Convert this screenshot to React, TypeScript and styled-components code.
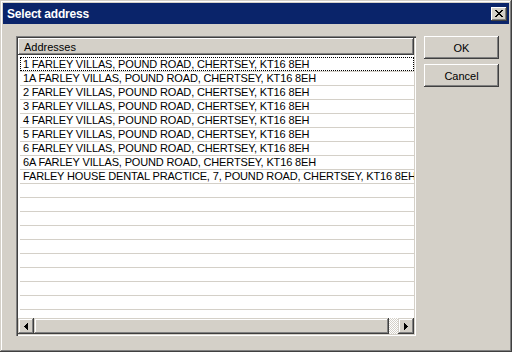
import React from "react";
import styled, { createGlobalStyle } from "styled-components";

const GlobalStyle = createGlobalStyle`
  html, body { margin: 0; padding: 0; background: #d4d0c8; }
  body { width: 512px; height: 352px; overflow: hidden; font-family: "Liberation Sans", Arial, sans-serif; }
  * { box-sizing: border-box; }
`;

const Window = styled.div`
  width: 512px;
  height: 352px;
  background: #d4d0c8;
  padding: 3px;
  display: flex;
  flex-direction: column;
  box-shadow: inset -1px -1px #404040, inset 1px 1px #d4d0c8, inset -2px -2px #808080,
    inset 2px 2px #ffffff;
`;

const TitleBar = styled.div`
  height: 21px;
  flex: none;
  background: #0a246a;
  display: flex;
  align-items: center;
  justify-content: space-between;
  padding: 0 2px 0 4px;
`;

const Title = styled.span`
  color: #ffffff;
  font-weight: bold;
  font-size: 12px;
  letter-spacing: -0.2px;
`;

const CloseButton = styled.div`
  width: 16px;
  height: 14px;
  background: #d4d0c8;
  display: flex;
  align-items: center;
  justify-content: center;
  box-shadow: inset -1px -1px #404040, inset 1px 1px #ffffff, inset -2px -2px #808080;
`;

const Body = styled.div`
  flex: 1;
  display: flex;
  gap: 8px;
  padding: 12px 10px 12px 13px;
`;

const ListBox = styled.div`
  width: 400px;
  height: 300px;
  padding: 2px;
  background: #ffffff;
  display: flex;
  flex-direction: column;
  box-shadow: inset 1px 1px #808080, inset 2px 2px #404040, inset -1px -1px #ffffff,
    inset -2px -2px #d4d0c8;
`;

const Header = styled.div`
  height: 17px;
  flex: none;
  background: #d4d0c8;
  display: flex;
  align-items: center;
  padding-left: 6px;
  font-size: 11px;
  color: #000;
  box-shadow: inset -1px -1px #404040, inset 1px 1px #ffffff, inset -2px -2px #808080;
`;

const Rows = styled.div`
  flex: 1;
  overflow: hidden;
  padding-top: 2px;
`;

const Row = styled.div<{ $focused?: boolean }>`
  height: 14px;
  margin-left: 2px;
  border-top: 1px solid ${(p) => (p.$focused ? "transparent" : "#d4d0c8")};
  outline: ${(p) => (p.$focused ? "1px dotted #000" : "none")};
  outline-offset: -1px;
  font-size: 11px;
  letter-spacing: -0.15px;
  line-height: 13px;
  padding-left: 3px;
  white-space: nowrap;
  overflow: hidden;
  color: #000;
`;

const HScroll = styled.div`
  height: 16px;
  flex: none;
  display: flex;
  background: repeating-conic-gradient(#ffffff 0 25%, #d4d0c8 0 50%) 0 0 / 2px 2px;
`;

const ScrollPart = styled.div<{ $w?: number }>`
  width: ${(p) => (p.$w ? `${p.$w}px` : "16px")};
  height: 16px;
  flex: none;
  background: #d4d0c8;
  display: flex;
  align-items: center;
  justify-content: center;
  box-shadow: inset -1px -1px #404040, inset 1px 1px #d4d0c8, inset -2px -2px #808080,
    inset 2px 2px #ffffff;
`;

const Track = styled.div`
  flex: 1;
`;

const Side = styled.div`
  display: flex;
  flex-direction: column;
  gap: 5px;
`;

const Button = styled.div`
  width: 75px;
  height: 23px;
  background: #d4d0c8;
  display: flex;
  align-items: center;
  justify-content: center;
  font-size: 11px;
  color: #000;
  box-shadow: inset -1px -1px #404040, inset 1px 1px #ffffff, inset -2px -2px #808080;
`;

const addresses = [
  "1 FARLEY VILLAS, POUND ROAD, CHERTSEY, KT16 8EH",
  "1A FARLEY VILLAS, POUND ROAD, CHERTSEY, KT16 8EH",
  "2 FARLEY VILLAS, POUND ROAD, CHERTSEY, KT16 8EH",
  "3 FARLEY VILLAS, POUND ROAD, CHERTSEY, KT16 8EH",
  "4 FARLEY VILLAS, POUND ROAD, CHERTSEY, KT16 8EH",
  "5 FARLEY VILLAS, POUND ROAD, CHERTSEY, KT16 8EH",
  "6 FARLEY VILLAS, POUND ROAD, CHERTSEY, KT16 8EH",
  "6A FARLEY VILLAS, POUND ROAD, CHERTSEY, KT16 8EH",
  "FARLEY HOUSE DENTAL PRACTICE, 7, POUND ROAD, CHERTSEY, KT16 8EH",
];

const rows = [...addresses, ...Array(12).fill("")];

export default function App() {
  return (
    <>
      <GlobalStyle />
      <Window>
        <TitleBar>
          <Title>Select address</Title>
          <CloseButton>
            <svg width="8" height="7" viewBox="0 0 8 7" shapeRendering="crispEdges">
              <path
                d="M0 0h2v1h-2zM6 0h2v1h-2zM1 1h2v1h-2zM5 1h2v1h-2zM2 2h4v1h-4zM3 3h2v1h-2zM2 4h4v1h-4zM1 5h2v1h-2zM5 5h2v1h-2zM0 6h2v1h-2zM6 6h2v1h-2z"
                fill="#000"
              />
            </svg>
          </CloseButton>
        </TitleBar>
        <Body>
          <ListBox>
            <Header>Addresses</Header>
            <Rows>
              {rows.map((a, i) => (
                <Row key={i} $focused={i === 0}>
                  {a}
                </Row>
              ))}
            </Rows>
            <HScroll>
              <ScrollPart>
                <svg width="4" height="7" viewBox="0 0 4 7" shapeRendering="crispEdges">
                  <path d="M3 0h1v7h-1zM2 1h1v5h-1zM1 2h1v3h-1zM0 3h1v1h-1z" fill="#000" />
                </svg>
              </ScrollPart>
              <ScrollPart $w={355} />
              <Track />
              <ScrollPart>
                <svg width="4" height="7" viewBox="0 0 4 7" shapeRendering="crispEdges">
                  <path d="M0 0h1v7h-1zM1 1h1v5h-1zM2 2h1v3h-1zM3 3h1v1h-1z" fill="#000" />
                </svg>
              </ScrollPart>
            </HScroll>
          </ListBox>
          <Side>
            <Button>OK</Button>
            <Button>Cancel</Button>
          </Side>
        </Body>
      </Window>
    </>
  );
}
